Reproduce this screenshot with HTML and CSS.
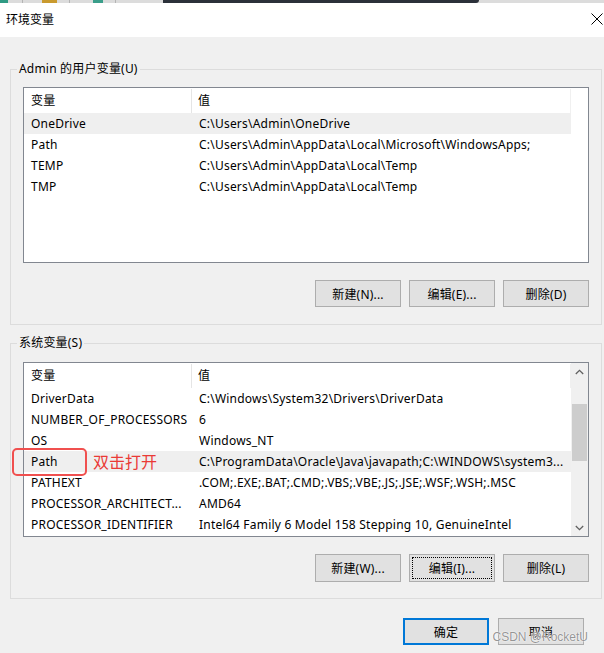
FILE: index.html
```html
<!DOCTYPE html>
<html lang="zh-CN">
<head>
<meta charset="utf-8">
<title>环境变量</title>
<link rel="stylesheet" href="styles.css">
</head>
<body>
<div class="window">
  <div class="strip">
    <span class="tb tb-teal"></span><span class="tb-sep"></span><span class="tb tb-gold"></span><span class="tb-sep"></span><span class="tb tb-teal2"></span><span class="tb-sep"></span>
    <span class="tb-dark"></span>
  </div>
  <div class="titlebar">
    <span class="title">环境变量</span>
    <svg class="close" width="12" height="12" viewBox="0 0 12 12"><path d="M0.5 0.5 L11.5 11.5 M11.5 0.5 L0.5 11.5" stroke="#000" stroke-width="1" fill="none"/></svg>
  </div>
  <div class="body">
    <fieldset class="group">
      <legend>Admin 的用户变量(U)</legend>
      <div class="list list-user">
        <div class="list-main">
          <div class="row head"><span class="c1">变量</span><span class="c2">值</span></div>
          <div class="row sel"><span class="c1">OneDrive</span><span class="c2">C:\Users\Admin\OneDrive</span></div>
          <div class="row"><span class="c1">Path</span><span class="c2">C:\Users\Admin\AppData\Local\Microsoft\WindowsApps;</span></div>
          <div class="row"><span class="c1">TEMP</span><span class="c2">C:\Users\Admin\AppData\Local\Temp</span></div>
          <div class="row"><span class="c1">TMP</span><span class="c2">C:\Users\Admin\AppData\Local\Temp</span></div>
        </div>
        <div class="noscroll"></div>
      </div>
      <div class="btnrow">
        <button class="btn">新建(N)...</button>
        <button class="btn">编辑(E)...</button>
        <button class="btn">删除(D)</button>
      </div>
    </fieldset>

    <fieldset class="group group-sys">
      <legend>系统变量(S)</legend>
      <div class="list list-sys">
        <div class="list-main">
          <div class="row head"><span class="c1">变量</span><span class="c2">值</span></div>
          <div class="row"><span class="c1">DriverData</span><span class="c2">C:\Windows\System32\Drivers\DriverData</span></div>
          <div class="row"><span class="c1">NUMBER_OF_PROCESSORS</span><span class="c2">6</span></div>
          <div class="row"><span class="c1">OS</span><span class="c2">Windows_NT</span></div>
          <div class="row sel annotated"><span class="c1">Path</span><span class="c2">C:\ProgramData\Oracle\Java\javapath;C:\WINDOWS\system3...</span>
            <span class="mark"></span><span class="mark-text">双击打开</span>
          </div>
          <div class="row"><span class="c1">PATHEXT</span><span class="c2">.COM;.EXE;.BAT;.CMD;.VBS;.VBE;.JS;.JSE;.WSF;.WSH;.MSC</span></div>
          <div class="row"><span class="c1">PROCESSOR_ARCHITECT...</span><span class="c2">AMD64</span></div>
          <div class="row"><span class="c1">PROCESSOR_IDENTIFIER</span><span class="c2">Intel64 Family 6 Model 158 Stepping 10, GenuineIntel</span></div>
        </div>
        <div class="scrollbar">
          <div class="sb-btn"><svg width="9" height="6" viewBox="0 0 9 6"><path d="M0.8 5 L4.5 1.3 L8.2 5" stroke="#606060" stroke-width="1.3" fill="none"/></svg></div>
          <div class="sb-track"><div class="sb-thumb"></div></div>
          <div class="sb-btn"><svg width="9" height="6" viewBox="0 0 9 6"><path d="M0.8 1 L4.5 4.7 L8.2 1" stroke="#606060" stroke-width="1.3" fill="none"/></svg></div>
        </div>
      </div>
      <div class="btnrow">
        <button class="btn">新建(W)...</button>
        <button class="btn focus">编辑(I)...</button>
        <button class="btn">删除(L)</button>
      </div>
    </fieldset>

    <div class="footer">
      <button class="btn default">确定</button>
      <button class="btn">取消</button>
    </div>
  </div>
  <div class="watermark">CSDN @RocketU</div>
</div>
</body>
</html>
```

FILE: styles.css
```css
* { box-sizing: border-box; }
html, body {
  margin: 0;
  padding: 0;
  background: #f0f0f0;
}
body {
  font-family: "Noto Sans", "Noto Sans CJK SC", sans-serif;
  font-size: 12px;
  color: #000;
}
.window {
  position: relative;
  width: 604px;
  height: 653px;
  overflow: hidden;
  background: #f0f0f0;
}
.strip {
  height: 3px;
  display: flex;
  background: #dcdcdc;
}
.tb { height: 3px; }
.tb-teal { width: 8px; background: #2f9a83; margin-right: 14px; }
.tb-gold { width: 15px; background: #c99a2e; margin: 0 12px 0 8px; }
.tb-teal2 { width: 10px; background: #3a9e8a; margin: 0 12px 0 12px; }
.tb-sep { width: 1px; height: 3px; background: #b4b4b4; margin-right: 11px; }
.tb-dark {
  margin-left: 36px;
  width: 316px;
  height: 3px;
  background: #2b313a;
  border-radius: 0 0 3px 0;
}
.titlebar {
  height: 34px;
  background: #fff;
  display: flex;
  align-items: center;
  justify-content: space-between;
  padding: 0 1px 2px 6px;
}
.title { font-size: 12px; }
.close { display: block; }
.body {
  padding: 24px 2px 0 10px;
}
.group {
  margin: 0;
  border: 1px solid #dcdcdc;
  padding: 10px 12px 17px 12px;
  min-width: 0;
}
.group legend {
  padding: 0 2px;
  margin-left: -6px;
  line-height: 16px;
  font-size: 12px;
  letter-spacing: 0.2px;
}
.group-sys {
  margin-top: 10px;
  padding-top: 11px;
  padding-bottom: 16px;
}
.list {
  border: 1px solid #828790;
  background: #fff;
  display: flex;
}
.list-user { height: 176px; }
.list-sys { height: 175px; }
.list-main {
  flex: 1;
  min-width: 0;
}
.noscroll { width: 17px; }
.row {
  height: 21px;
  display: flex;
  align-items: center;
  white-space: nowrap;
  position: relative;
  letter-spacing: 0.22px;
}
.row.head { height: 25px; }
.row.sel { background: #efefef; }
.c1 {
  width: 168px;
  padding-left: 7px;
  overflow: hidden;
  flex: none;
}
.c2 {
  padding-left: 7px;
  flex: 1;
  overflow: hidden;
}
.head .c1 { border-right: 1px solid #e5e5e5; height: 24px; line-height: 24px; }
.head .c2 { padding-left: 6px; height: 24px; line-height: 24px; border-right: 1px solid #f0f0f0; }
.scrollbar {
  width: 17px;
  background: #f0f0f0;
  display: flex;
  flex-direction: column;
}
.sb-btn {
  height: 17px;
  display: flex;
  align-items: center;
  justify-content: center;
}
.sb-track {
  flex: 1;
  padding-top: 24px;
}
.sb-thumb {
  height: 57px;
  background: #cdcdcd;
  margin: 0 1px;
}
.btnrow {
  margin-top: 17px;
  display: flex;
  justify-content: flex-end;
  gap: 8px;
}
.btn {
  width: 86px;
  height: 27px;
  border: 1px solid #adadad;
  background: #e1e1e1;
  font-family: "Noto Sans", "Noto Sans CJK SC", sans-serif;
  font-size: 12px;
  letter-spacing: 0.2px;
  color: #000;
  padding: 0;
  margin: 0;
}
.group-sys .btn { height: 28px; }
.btn.focus {
  outline: 1px dotted #000;
  outline-offset: -4px;
}
.btn.default {
  border: 2px solid #0078d7;
}
.footer {
  margin-top: 19px;
  padding-right: 18px;
  display: flex;
  justify-content: flex-end;
  gap: 9px;
}
.mark {
  position: absolute;
  left: -12px;
  top: -3px;
  width: 75px;
  height: 28px;
  border: 2.5px solid #f0504f;
  border-radius: 5px;
}
.mark-text {
  position: absolute;
  left: 69px;
  top: 0;
  line-height: 21px;
  font-size: 16px;
  letter-spacing: 0;
  color: #ea3a36;
  font-family: "Noto Sans CJK SC", sans-serif;
}
.watermark {
  position: absolute;
  right: 16px;
  bottom: 9px;
  font-family: "Liberation Sans", Arial, sans-serif;
  font-size: 12px;
  color: rgba(130, 130, 130, 0.85);
  text-shadow: 0 0 1px #fff, 0 0 2px #fff;
}
```
